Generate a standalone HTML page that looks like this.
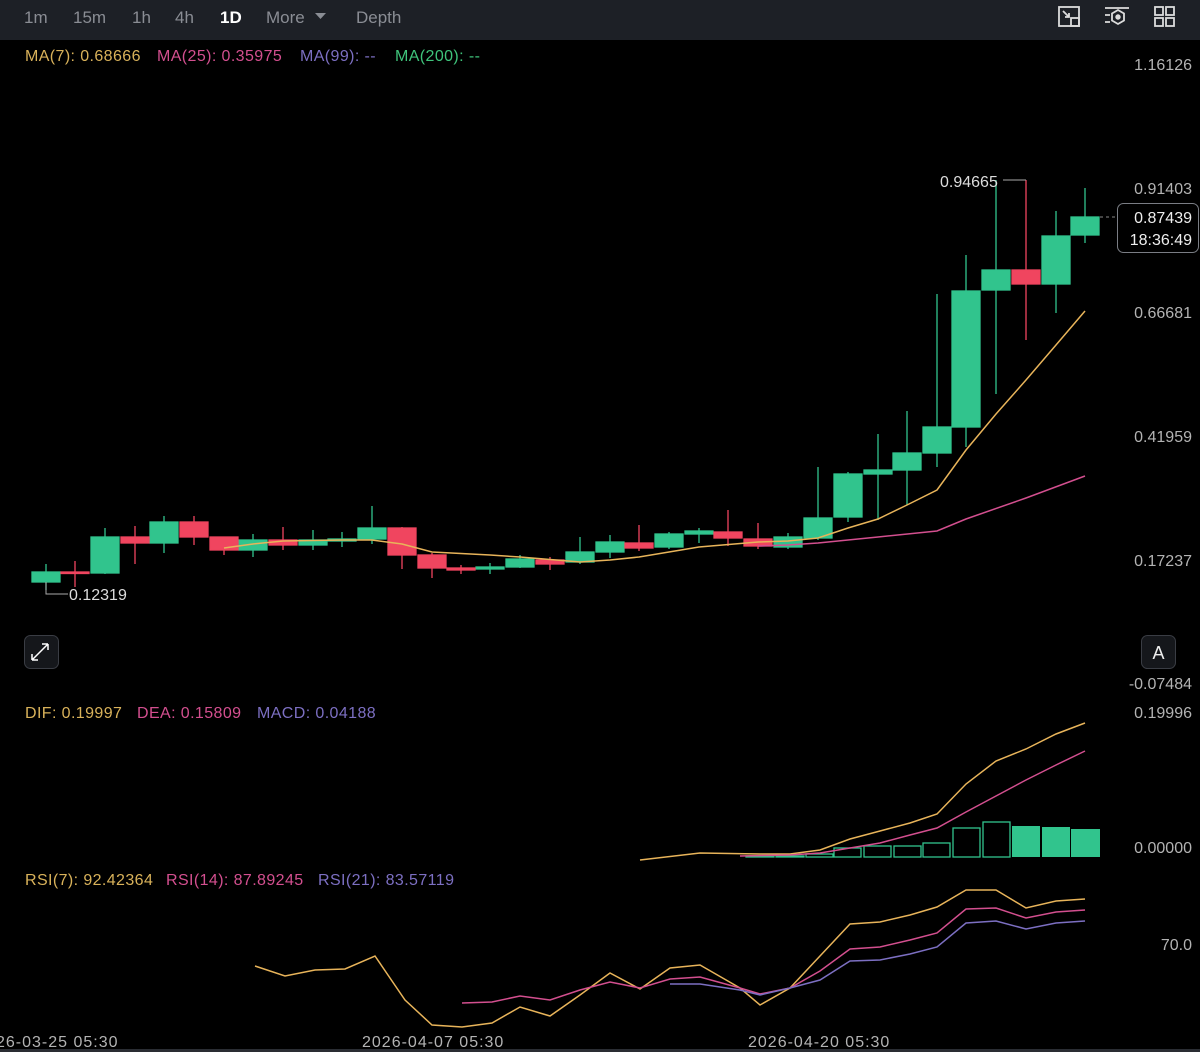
<!DOCTYPE html>
<html><head><meta charset="utf-8"><style>
html,body{margin:0;padding:0;background:#000;width:1200px;height:1052px;overflow:hidden;font-family:"Liberation Sans",sans-serif}
svg{display:block}
</style></head><body>
<svg width="1200" height="1052" viewBox="0 0 1200 1052" xmlns="http://www.w3.org/2000/svg" font-family="Liberation Sans, sans-serif">
<rect width="1200" height="1052" fill="#000"/>
<rect width="1200" height="40" fill="#1d2026"/>
<g font-size="17" fill="#8a8d94">
<text x="24" y="23">1m</text><text x="73" y="23">15m</text><text x="132" y="23">1h</text><text x="175" y="23">4h</text>
<text x="220" y="23" fill="#fff" font-weight="bold">1D</text>
<text x="266" y="23">More</text><path d="M315 13h11l-5.5 6z" fill="#8a8d94"/>
<text x="356" y="23">Depth</text></g>
<g stroke="#dcdcdc" stroke-width="1.8" fill="none">
<rect x="1059" y="7" width="20" height="19"/><rect x="1071" y="18" width="8" height="8"/><path d="M1063 11l6 6M1069 13v4h-4"/>
<path d="M1105 8h24M1105 15h5M1105 22h5"/><path d="M1118 10l6 3.5v7l-6 3.5l-6-3.5v-7z"/><circle cx="1118" cy="17" r="1.8" fill="#dcdcdc"/>
<rect x="1155" y="7" width="8" height="8"/><rect x="1166" y="7" width="8" height="8"/><rect x="1155" y="18" width="8" height="8"/><rect x="1166" y="18" width="8" height="8"/>
</g>
<g font-size="16" letter-spacing="0.4">
<text x="25" y="61" fill="#d9b25a">MA(7): 0.68666</text>
<text x="157" y="61" fill="#d34f8f">MA(25): 0.35975</text>
<text x="300" y="61" fill="#7c6fc2">MA(99): --</text>
<text x="395" y="61" fill="#3fc47b">MA(200): --</text>
</g>
<g font-size="16" fill="#b3b3b3" text-anchor="end">
<text x="1192" y="70">1.16126</text><text x="1192" y="194">0.91403</text><text x="1192" y="318">0.66681</text>
<text x="1192" y="442">0.41959</text><text x="1192" y="566">0.17237</text><text x="1192" y="689">-0.07484</text>
<text x="1192" y="718">0.19996</text><text x="1192" y="853">0.00000</text><text x="1192" y="950">70.0</text>
</g>
<g stroke-width="1.3">
<g fill="#31c48d" stroke="#31c48d">
<line x1="46" y1="564" x2="46" y2="590"/><rect x="32" y="572" width="28" height="10"/>
<line x1="105" y1="528" x2="105" y2="574"/><rect x="91" y="537" width="28" height="36"/>
<line x1="164" y1="516" x2="164" y2="553"/><rect x="150" y="522" width="28" height="21"/>
<line x1="253" y1="534" x2="253" y2="557"/><rect x="239" y="540" width="28" height="10"/>
<line x1="313" y1="530" x2="313" y2="550"/><rect x="299" y="540" width="28" height="5"/>
<line x1="342" y1="532" x2="342" y2="547"/><rect x="328" y="539" width="28" height="2"/>
<line x1="372" y1="506" x2="372" y2="544"/><rect x="358" y="528" width="28" height="11"/>
<line x1="490" y1="563" x2="490" y2="574"/><rect x="476" y="567" width="28" height="2"/>
<line x1="520" y1="555" x2="520" y2="568"/><rect x="506" y="559" width="28" height="8"/>
<line x1="580" y1="537" x2="580" y2="564"/><rect x="566" y="552" width="28" height="10"/>
<line x1="610" y1="535" x2="610" y2="558"/><rect x="596" y="542" width="28" height="10"/>
<line x1="669" y1="532" x2="669" y2="549"/><rect x="655" y="534" width="28" height="13"/>
<line x1="699" y1="528" x2="699" y2="543"/><rect x="685" y="531" width="28" height="3"/>
<line x1="788" y1="533" x2="788" y2="549"/><rect x="774" y="537" width="28" height="10"/>
<line x1="818" y1="467" x2="818" y2="540"/><rect x="804" y="518" width="28" height="20"/>
<line x1="848" y1="472" x2="848" y2="522"/><rect x="834" y="474" width="28" height="43"/>
<line x1="878" y1="434" x2="878" y2="520"/><rect x="864" y="470" width="28" height="4"/>
<line x1="907" y1="411" x2="907" y2="505"/><rect x="893" y="453" width="28" height="17"/>
<line x1="937" y1="294" x2="937" y2="467"/><rect x="923" y="427" width="28" height="26"/>
<line x1="966" y1="255" x2="966" y2="447"/><rect x="952" y="291" width="28" height="136"/>
<line x1="996" y1="180" x2="996" y2="394"/><rect x="982" y="270" width="28" height="20"/>
<line x1="1056" y1="211" x2="1056" y2="313"/><rect x="1042" y="236" width="28" height="48"/>
<line x1="1085" y1="188" x2="1085" y2="243"/><rect x="1071" y="217" width="28" height="18"/>
</g>
<g fill="#f0455f" stroke="#f0455f">
<line x1="75" y1="561" x2="75" y2="587"/><rect x="61" y="572" width="28" height="1.5"/>
<line x1="135" y1="526" x2="135" y2="564"/><rect x="121" y="537" width="28" height="6"/>
<line x1="194" y1="516" x2="194" y2="545"/><rect x="180" y="522" width="28" height="15"/>
<line x1="224" y1="537" x2="224" y2="555"/><rect x="210" y="537" width="28" height="13"/>
<line x1="283" y1="527" x2="283" y2="550"/><rect x="269" y="540" width="28" height="5"/>
<line x1="402" y1="527" x2="402" y2="569"/><rect x="388" y="528" width="28" height="27"/>
<line x1="432" y1="553" x2="432" y2="578"/><rect x="418" y="555" width="28" height="13"/>
<line x1="461" y1="565" x2="461" y2="574"/><rect x="447" y="568" width="28" height="2"/>
<line x1="550" y1="557" x2="550" y2="570"/><rect x="536" y="560" width="28" height="4"/>
<line x1="639" y1="525" x2="639" y2="551"/><rect x="625" y="543" width="28" height="5"/>
<line x1="728" y1="510" x2="728" y2="546"/><rect x="714" y="532" width="28" height="6"/>
<line x1="758" y1="523" x2="758" y2="549"/><rect x="744" y="539" width="28" height="7"/>
<line x1="1026" y1="180" x2="1026" y2="340"/><rect x="1012" y="270" width="28" height="14"/>
</g></g>
<polyline fill="none" stroke="#e8b45a" stroke-width="1.5" points="224,548 253,544 283,541 342,540 372,540 402,544 432,552 490,555 520,557 580,562 610,560 639,557 669,552 699,547 758,542 788,541 818,538 848,528 878,519 907,505 937,490 966,450 996,414 1026,380 1056,345 1085,311"/>
<polyline fill="none" stroke="#d34f8f" stroke-width="1.5" points="758,546 788,545 818,543 878,537 937,531 966,519 1026,498 1085,476"/>
<polyline fill="none" stroke="#aaa" stroke-width="1" points="46,582 46,594 68,594"/>
<text x="69" y="600" font-size="16" fill="#ddd">0.12319</text>
<polyline fill="none" stroke="#aaa" stroke-width="1" points="1003,180 1026,180"/>
<text x="940" y="187" font-size="16" fill="#ddd">0.94665</text>
<line x1="1100" y1="217" x2="1117" y2="217" stroke="#888" stroke-dasharray="3,3"/>
<rect x="1117.5" y="203.5" width="81" height="49" rx="6" fill="#000" stroke="#7a7d84"/>
<text x="1192" y="223" font-size="16" fill="#eee" text-anchor="end">0.87439</text>
<text x="1192" y="245" font-size="16" fill="#eee" text-anchor="end">18:36:49</text>
<rect x="24.5" y="635.5" width="34" height="33" rx="6" fill="#15171b" stroke="#3a3d44"/>
<path d="M32 660l16-16M32 660v-6M32 660h6M48 644h-6M48 644v6" stroke="#fff" stroke-width="1.5" fill="none"/>
<rect x="1141.5" y="635.5" width="34" height="33" rx="6" fill="#15171b" stroke="#3a3d44"/>
<text x="1158.5" y="659" font-size="18" fill="#eee" text-anchor="middle">A</text>
<g font-size="16" letter-spacing="0.4">
<text x="25" y="718" fill="#d9b25a">DIF: 0.19997</text>
<text x="137" y="718" fill="#d34f8f">DEA: 0.15809</text>
<text x="257" y="718" fill="#7c6fc2">MACD: 0.04188</text>
<text x="25" y="885" fill="#d9b25a">RSI(7): 92.42364</text>
<text x="166" y="885" fill="#d34f8f">RSI(14): 87.89245</text>
<text x="318" y="885" fill="#7c6fc2">RSI(21): 83.57119</text>
</g>
<g stroke="#31c48d" stroke-width="1.3" fill="none">
<rect x="746" y="856" width="28" height="1"/><rect x="776" y="856" width="28" height="1"/><rect x="806" y="854" width="27" height="3"/>
<rect x="834" y="848" width="27" height="9"/><rect x="864" y="846" width="27" height="11"/><rect x="894" y="846" width="27" height="11"/>
<rect x="923" y="843" width="27" height="14"/><rect x="953" y="828" width="27" height="29"/><rect x="983" y="822" width="27" height="35"/>
</g>
<g fill="#31c48d"><rect x="1012" y="826" width="28" height="31"/><rect x="1042" y="827" width="28" height="30"/><rect x="1071" y="829" width="29" height="28"/></g>
<polyline fill="none" stroke="#e8b45a" stroke-width="1.5" points="640,860 700,853 760,854 790,854 820,850 850,839 880,831 910,823 937,814 966,784 996,761 1026,749 1056,734 1085,723"/>
<polyline fill="none" stroke="#d34f8f" stroke-width="1.5" points="740,856 790,855 820,853 850,848 880,843 910,835 937,828 966,812 996,796 1026,780 1056,765 1085,751"/>
<polyline fill="none" stroke="#e8b45a" stroke-width="1.5" points="255,966 285,976 315,970 345,969 375,956 405,1000 432,1025 462,1027 492,1023 520,1007 550,1016 580,995 610,973 640,989 670,968 700,965 740,988 760,1005 790,988 820,956 850,924 880,922 910,915 937,907 966,890 996,890 1026,908 1056,901 1085,899"/>
<polyline fill="none" stroke="#d34f8f" stroke-width="1.5" points="462,1003 492,1002 520,996 550,1000 580,990 610,982 640,988 670,979 700,977 740,988 760,994 790,988 820,971 850,949 880,947 910,940 937,933 966,909 996,908 1026,918 1056,912 1085,910"/>
<polyline fill="none" stroke="#7c6fc2" stroke-width="1.5" points="670,984 700,984 740,990 760,995 790,988 820,980 850,961 880,960 910,954 937,947 966,923 996,921 1026,929 1056,923 1085,921"/>
<g font-size="16" fill="#b3b3b3" letter-spacing="1">
<text x="-4" y="1047">26-03-25 05:30</text>
<text x="362" y="1047">2026-04-07 05:30</text>
<text x="748" y="1047">2026-04-20 05:30</text>
</g>
<rect x="0" y="1049" width="1200" height="3" fill="#2a2d33"/>
</svg>
</body></html>
